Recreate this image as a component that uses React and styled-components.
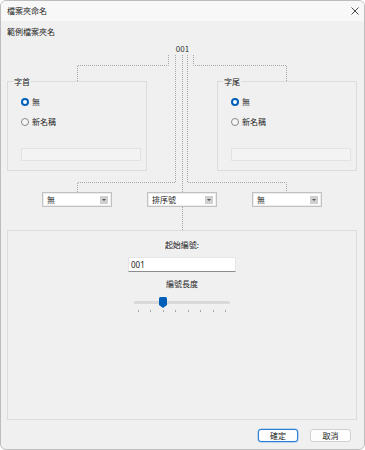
import React from 'react';
import styled, { createGlobalStyle } from 'styled-components';

const GlobalStyle = createGlobalStyle`
  html, body {
    margin: 0;
    padding: 0;
    background: #ffffff;
  }
  body {
    font-family: 'Noto Sans CJK TC', 'Noto Sans', sans-serif;
    color: #222;
  }
`;

const Window = styled.div`
  width: 365px;
  height: 450px;
  box-sizing: border-box;
  border: 1px solid #bdbdbd;
  border-radius: 6px;
  overflow: hidden;
  background: #f0f0f0;
  display: flex;
  flex-direction: column;
`;

const TitleBar = styled.div`
  height: 20px;
  flex-shrink: 0;
  display: flex;
  align-items: center;
  justify-content: space-between;
  padding: 0 5px 0 6px;
  background: #f8f8f8;
  font-size: 8px;
  line-height: 12px;
`;

const CloseButton = styled.div`
  display: flex;
  align-items: center;
  color: #333;
`;

const Body = styled.div`
  flex: 1;
  display: flex;
  flex-direction: column;
  padding: 0 7px 0 6px;
`;

const SampleLabel = styled.div`
  margin-top: 5px;
  font-size: 8px;
  line-height: 12px;
`;

const Diagram = styled.div`
  position: relative;
  display: flex;
  flex-direction: column;
  padding: 5px 0 23px;
`;

const Connectors = styled.svg`
  position: absolute;
  left: 0;
  top: 0;
  width: 100%;
  height: 100%;
  pointer-events: none;
`;

const Preview = styled.div`
  text-align: center;
  font-size: 8px;
  line-height: 12px;
  color: #333;
  padding-left: 1px;
`;

const Columns = styled.div`
  display: grid;
  grid-template-columns: 140px 1fr 140px;
  justify-items: ${p => (p.$center ? 'center' : 'stretch')};
  margin-top: ${p => p.$top}px;
`;

const GroupBox = styled.div`
  position: relative;
  grid-column: ${p => p.$col};
  border: 1px solid #dcdcdc;
  padding: 14px 5px 9px 13px;
  display: flex;
  flex-direction: column;
`;

const Legend = styled.span`
  position: absolute;
  top: -6px;
  left: 5px;
  padding: 0 1px;
  background: #f0f0f0;
  font-size: 8px;
  line-height: 12px;
`;

const RadioRow = styled.label`
  display: flex;
  align-items: center;
  gap: 3px;
  height: 12px;
  font-size: 8px;
  line-height: 12px;
  & + & {
    margin-top: 8px;
  }
`;

const RadioDot = styled.span`
  width: 8px;
  height: 8px;
  box-sizing: border-box;
  border-radius: 50%;
  flex-shrink: 0;
  background: ${p => (p.$on ? '#ffffff' : '#f6f6f6')};
  border: ${p => (p.$on ? '2.5px solid #005fb8' : '1px solid #8a8a8a')};
`;

const DisabledInput = styled.div`
  margin-top: 20px;
  height: 13px;
  box-sizing: border-box;
  border: 1px solid #e2e2e2;
  background: #f3f3f3;
`;

const Select = styled.div`
  width: 70px;
  height: 15px;
  box-sizing: border-box;
  grid-column: ${p => p.$col};
  display: flex;
  align-items: center;
  justify-content: space-between;
  padding: 0 3px 0 4px;
  background: #ffffff;
  border: 1px solid #c2c2c2;
  box-shadow: inset 0 0 0 1px #ececec;
  font-size: 8px;
  line-height: 12px;
`;

const SelectArrow = styled.span`
  width: 8px;
  height: 8px;
  background: #cfcfcf;
  display: flex;
  align-items: center;
  justify-content: center;
  &::after {
    content: '';
    border-left: 2.5px solid transparent;
    border-right: 2.5px solid transparent;
    border-top: 2.5px solid #555;
  }
`;

const NumberBox = styled.div`
  border: 1px solid #dcdcdc;
  flex: 1;
  display: flex;
  flex-direction: column;
  align-items: center;
  padding-top: 8px;
`;

const FieldLabel = styled.div`
  font-size: 8px;
  line-height: 12px;
  margin-top: ${p => p.$top || 0}px;
`;

const TextInput = styled.div`
  margin-top: 6px;
  width: 108px;
  height: 15px;
  box-sizing: border-box;
  background: #ffffff;
  border: 1px solid #e6e6e6;
  border-bottom-color: #8c8c8c;
  padding-left: 2px;
  font-family: 'Noto Sans', sans-serif;
  font-size: 8px;
  line-height: 13px;
  color: #222;
`;

const Slider = styled.div`
  position: relative;
  width: 96px;
  margin-top: 7px;
  padding-top: 4px;
`;

const Track = styled.div`
  height: 3px;
  border-radius: 2px;
  background: #d9d9d9;
`;

const Thumb = styled.svg`
  position: absolute;
  top: 0;
`;

const Ticks = styled.div`
  display: flex;
  justify-content: space-between;
  padding: 0 4px;
  margin-top: 6px;
`;

const Tick = styled.span`
  width: 1px;
  height: 2px;
  background: #a5a5a5;
`;

const Footer = styled.div`
  display: flex;
  justify-content: flex-end;
  gap: 12px;
  margin: 9px 6px 7px 0;
`;

const Button = styled.button`
  width: ${p => p.$w}px;
  height: 13px;
  box-sizing: border-box;
  padding: 0;
  border-radius: 3px;
  background: #fdfdfd;
  border: 1px solid ${p => (p.$primary ? '#2a7fd4' : '#d0d0d0')};
  box-shadow: ${p => (p.$primary ? '0 0 0 0.5px #8ab8e6' : 'none')};
  font-family: 'Noto Sans CJK TC', sans-serif;
  font-size: 8px;
  line-height: 11px;
  color: #222;
`;

function Group({ col, title, value }) {
  return (
    <GroupBox $col={col}>
      <Legend>{title}</Legend>
      <RadioRow><RadioDot $on={value === 0} />無</RadioRow>
      <RadioRow><RadioDot $on={value === 1} />新名稱</RadioRow>
      <DisabledInput />
    </GroupBox>
  );
}

const TICKS = 8;

export default function App() {
  const level = 2;
  const tickGap = 88 / (TICKS - 1);

  return (
    <>
      <GlobalStyle />
      <Window>
        <TitleBar>
          <span>檔案夾命名</span>
          <CloseButton>
            <svg width="8" height="8" viewBox="0 0 8 8">
              <path d="M0.5 0.5 L7.5 7.5 M7.5 0.5 L0.5 7.5" stroke="#333" strokeWidth="0.9" />
            </svg>
          </CloseButton>
        </TitleBar>
        <Body>
          <SampleLabel>範例檔案夾名</SampleLabel>
          <Diagram>
            <Connectors>
              <g fill="none" stroke="#a6a6a6" strokeWidth="1" strokeDasharray="1 1">
                <path d="M161.5 17 V27.5 H70.5 V43" />
                <path d="M168.5 17 V144.5 H70.5 V154" />
                <path d="M175.5 17 V154 M175.5 169 V192" />
                <path d="M180.5 17 V144.5 H279.5 V154" />
                <path d="M186.5 17 V27.5 H279.5 V43" />
              </g>
            </Connectors>
            <Preview>001</Preview>
            <Columns $top={26}>
              <Group col={1} title="字首" value={0} />
              <Group col={3} title="字尾" value={0} />
            </Columns>
            <Columns $top={21} $center>
              <Select $col={1}>無<SelectArrow /></Select>
              <Select $col={2}>排序號<SelectArrow /></Select>
              <Select $col={3}>無<SelectArrow /></Select>
            </Columns>
          </Diagram>
          <NumberBox>
            <FieldLabel>起始編號:</FieldLabel>
            <TextInput>001</TextInput>
            <FieldLabel $top={6}>編號長度</FieldLabel>
            <Slider>
              <Track />
              <Thumb width="8" height="11" viewBox="0 0 8 11" style={{ left: level * tickGap }}>
                <path d="M1.5 0 H6.5 Q8 0 8 1.5 V8 L4 11 L0 8 V1.5 Q0 0 1.5 0 Z" fill="#005fb8" />
              </Thumb>
              <Ticks>
                {Array.from({ length: TICKS }).map((_, i) => <Tick key={i} />)}
              </Ticks>
            </Slider>
          </NumberBox>
          <Footer>
            <Button $primary $w={40}>確定</Button>
            <Button $w={41}>取消</Button>
          </Footer>
        </Body>
      </Window>
    </>
  );
}
